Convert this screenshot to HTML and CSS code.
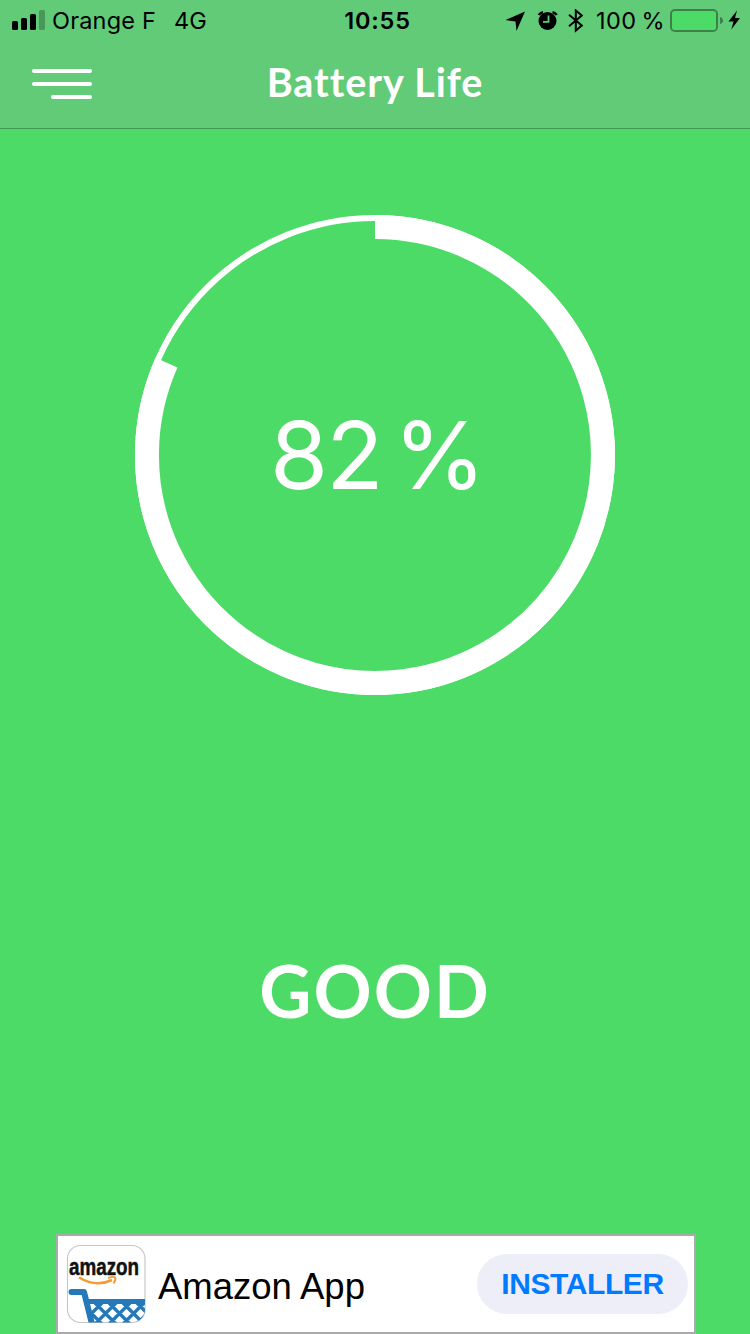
FILE: index.html
```
<!DOCTYPE html>
<html lang="en">
<head>
<meta charset="utf-8">
<title>Battery Life</title>
<link rel="stylesheet" href="styles.css">
</head>
<body>
<div class="screen">
  <header class="top">
    <div class="status">
      <div class="status-left">
        <svg class="signal" width="34" height="20" viewBox="0 0 34 20"><rect x="0" y="11" width="6" height="9" rx="1.5"/><rect x="9" y="8" width="6" height="12" rx="1.5"/><rect x="18" y="4" width="6" height="16" rx="1.5"/><rect x="27" y="0" width="6" height="20" rx="1.5" opacity=".25"/></svg>
        <span class="carrier">Orange F</span>
        <span class="network">4G</span>
      </div>
      <span class="clock">10:55</span>
      <div class="status-right">
        <svg class="status-icons" width="80" height="24" viewBox="0 0 80 24">
          <path d="M20 2.5 L11.5 22 L10.5 12.5 L.5 11 Z"/>
          <circle cx="42.5" cy="12" r="9"/>
          <path class="clock-hands" d="M43.5 6.5 V12.8 H38"/>
          <path class="alarm-bells" d="M33.8 6 Q35 3.8 38 3.2 M47.5 3.2 Q50.5 3.8 51.7 6"/>
          <path class="bluetooth" d="M64 5.8 L76.8 16.5 L70.8 21.5 V1.5 L76.8 6.5 L64 17.2"/>
        </svg>
        <span class="charge">100 %</span>
        <svg class="battery" width="72" height="24" viewBox="0 0 72 24">
          <rect class="battery-shell" x="1" y="1" width="46" height="21" rx="4"/>
          <rect class="battery-fill" x="2.2" y="2.2" width="43.6" height="18.6" rx="2.5"/>
          <path class="battery-tip" d="M50 8 Q53 9 53 11.5 Q53 14 50 15 Z"/>
          <path d="M67 1.5 L58.5 12.5 H63.5 L61.3 20.5 L70 9 H65 Z"/>
        </svg>
      </div>
    </div>
    <nav class="navbar">
      <svg class="menu" width="60" height="32" viewBox="0 0 60 32"><rect width="60" height="4" y="0" rx="2"/><rect y="13" width="60" height="4" rx="2"/><rect x="19" y="26" width="41" height="4" rx="2"/></svg>
      <h1 class="title">Battery Life</h1>
    </nav>
  </header>
  <main class="content">
    <div class="gauge">
      <svg class="ring" viewBox="0 0 480 480">
        <circle class="track" cx="240" cy="240" r="237"/>
        <path class="level" d="M240 12 A228 228 0 1 1 31.5 147.6"/>
      </svg>
      <span class="percent">82 %</span>
    </div>
    <p class="verdict">GOOD</p>
  </main>
  <aside class="ad">
    <svg class="app-icon" width="80" height="80" viewBox="0 0 80 80">
      <defs><clipPath id="tile"><rect x="1.5" y="1.5" width="77.5" height="77" rx="13"/></clipPath></defs>
      <rect class="tile" x="1.5" y="1.5" width="77.5" height="77" rx="13"/>
      <text class="brand" x="3" y="31" textLength="70" lengthAdjust="spacingAndGlyphs">amazon</text>
      <g clip-path="url(#tile)">
        <path class="smile" d="M13 33.5 Q30 43.5 46 36"/>
        <path class="smile-tip" d="M42 34 Q48 32 49.2 33.5 Q50 35.5 47.5 39.5"/>
        <path class="cart-handle" d="M5.5 48 H18 L26 80"/>
        <path class="cart-rim" d="M19 57.5 H79"/>
        <path class="mesh" d="M22 66 L37 81 M29 59 L51 81 M43 59 L65 81 M57 59 L79 81 M71 59 L81 69 M37 58 L23 72 M51 58 L28 81 M65 58 L42 81 M79 58 L56 81 M82 69 L70 81"/>
      </g>
    </svg>
    <span class="app-name">Amazon App</span>
    <span class="install">INSTALLER</span>
  </aside>
</div>
</body>
</html>
```
FILE: styles.css
```
* { box-sizing: border-box; }
body { margin: 0; }
.screen {
  width: 750px; height: 1334px; overflow: hidden;
  display: flex; flex-direction: column;
  background: #4cdb66; color: #fff;
  font-family: Inter, "Liberation Sans", sans-serif;
}
.top { height: 129px; flex: none; background: #62cb78; border-bottom: 1px solid #419850; }
.status {
  height: 41px; padding: 1px 8px 0 12px;
  display: grid; grid-template-columns: 1fr auto 1fr; align-items: center;
  color: #000; font-size: 23.5px; line-height: 40px; white-space: nowrap;
}
.status-left, .status-right { display: flex; align-items: center; }
.status-right { justify-content: flex-end; }
.signal { margin: -2px 6px 0 0; }
.carrier { letter-spacing: .2px; }
.network { margin-left: 18px; }
.clock { font-weight: 600; letter-spacing: .8px; padding-left: 1px; }
.charge { margin: 0 5px 0 11px; letter-spacing: .4px; word-spacing: -2px; }
.clock-hands { fill: none; stroke: #62cb78; stroke-width: 1.8; }
.alarm-bells { fill: none; stroke: #000; stroke-width: 2.5; }
.bluetooth { fill: none; stroke: #000; stroke-width: 2; }
.battery-shell { fill: none; stroke: #3d804b; stroke-width: 2; }
.battery-fill { fill: #4cdb66; }
.battery-tip { fill: #3d804b; }
.navbar {
  height: 83px; padding: 0 32px;
  display: grid; grid-template-columns: 1fr auto 1fr; align-items: center;
}
.menu { fill: #fff; margin-top: 5px; }
.title { margin: -2px 0 0; font: 700 39.5px/48px Lato, sans-serif; letter-spacing: .95px; }
.content { flex: 1; display: flex; flex-direction: column; align-items: center; padding-top: 86px; }
.gauge { width: 480px; height: 480px; display: grid; place-items: center; }
.ring { grid-area: 1 / 1; width: 480px; height: 480px; }
.track, .level { fill: none; stroke: #fff; stroke-width: 6; }
.level { stroke-width: 24; }
.percent { grid-area: 1 / 1; padding-left: 4px; font-size: 94px; font-weight: 400; line-height: 110px; letter-spacing: -1.8px; word-spacing: -13px; white-space: nowrap; }
.verdict { margin: 252px 0 0; font: 700 72px/86px Lato, sans-serif; letter-spacing: 2px; }
.ad {
  flex: none; width: 640px; height: 100px; margin: 0 auto 0 56px; padding: 0 6px 0 8px;
  display: flex; align-items: center;
  background: #fff; border: 2px solid #aaa; color: #000;
  font-family: "Liberation Sans", Arial, sans-serif;
}
.tile { fill: #fff; stroke: #c8c8c8; stroke-width: 1.2; }
.brand { font: 700 23px "Liberation Sans", Arial, sans-serif; fill: #111; stroke: #111; stroke-width: .5; }
.smile, .smile-tip { fill: none; stroke: #f79a32; stroke-width: 2.5; }
.smile-tip { stroke-width: 2; }
.cart-handle, .cart-rim, .mesh { fill: none; stroke: #2679b8; stroke-linecap: round; stroke-linejoin: round; }
.cart-handle { stroke-width: 6; }
.cart-rim { stroke-width: 5; stroke-linecap: butt; }
.mesh { stroke-width: 3.4; }
.app-name { margin-left: 12px; padding-top: 5px; font-size: 36.5px; }
.install {
  margin-left: auto; width: 211px; height: 60px; border-radius: 30px;
  background: #edeef7; color: #007aff; text-align: center;
  font-size: 30px; font-weight: 700; line-height: 59px; letter-spacing: -.4px;
}
```
